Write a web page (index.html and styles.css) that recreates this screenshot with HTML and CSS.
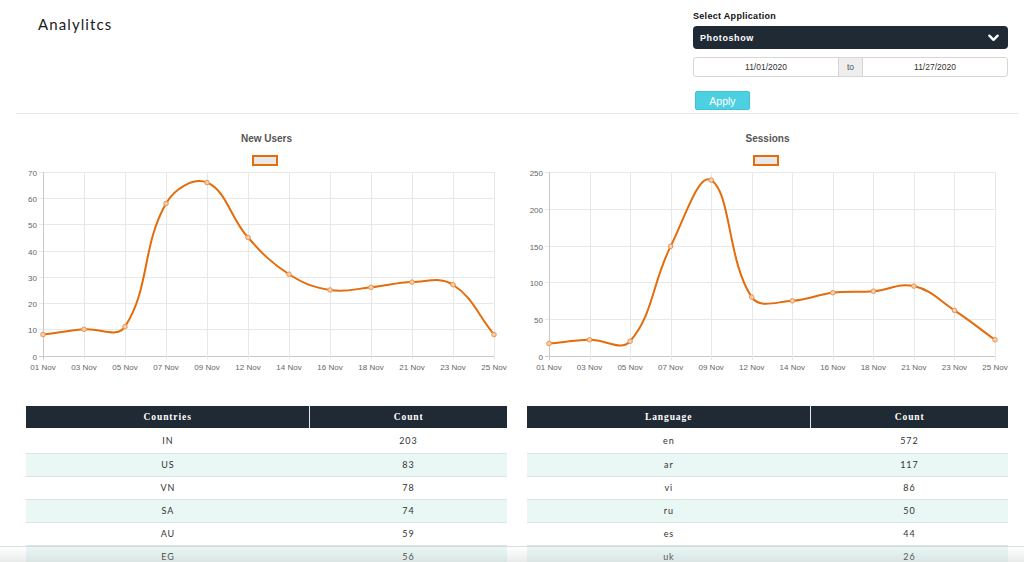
FILE: index.html
```html
<!DOCTYPE html>
<html>
<head>
<meta charset="utf-8">
<title>Analylitcs</title>
<link rel="stylesheet" href="styles.css">
</head>
<body>
<div class="page">
  <header class="topbar">
    <h1 class="title">Analylitcs</h1>
    <div class="controls">
      <div class="ctl-label">Select Application</div>
      <div class="select">
        <span>Photoshow</span>
        <svg class="chev" viewBox="0 0 12 8" width="11" height="8"><path d="M1.5 1.5 L6 6 L10.5 1.5" fill="none" stroke="#fff" stroke-width="2.6" stroke-linecap="round" stroke-linejoin="round"/></svg>
      </div>
      <div class="daterange">
        <div class="date">11/01/2020</div>
        <div class="to">to</div>
        <div class="date">11/27/2020</div>
      </div>
      <button class="apply">Apply</button>
    </div>
  </header>

  <section class="charts">
    <div class="chart">
      <div class="chart-title">New Users</div>
      <div class="legend-box"></div>
      <svg class="plot" width="481" height="210" viewBox="0 0 481 210"
        data-values="8,10,11,58,66,45,31,25,26,28,27,8" data-max="70" data-step="10"
        data-left="17" data-right="468" data-top="6" data-bottom="189.5"></svg>
    </div>
    <div class="chart">
      <div class="chart-title">Sessions</div>
      <div class="legend-box"></div>
      <svg class="plot" width="481" height="210" viewBox="0 0 481 210"
        data-values="17,22,20,149,239,80,75,86,88,95,62,22" data-max="250" data-step="50"
        data-left="22" data-right="468" data-top="6" data-bottom="190"></svg>
    </div>
  </section>

  <section class="tables">
    <table class="data">
      <thead><tr><th class="c1">Countries</th><th>Count</th></tr></thead>
      <tbody>
        <tr><td>IN</td><td>203</td></tr>
        <tr><td>US</td><td>83</td></tr>
        <tr><td>VN</td><td>78</td></tr>
        <tr><td>SA</td><td>74</td></tr>
        <tr><td>AU</td><td>59</td></tr>
        <tr><td>EG</td><td>56</td></tr>
      </tbody>
    </table>
    <table class="data">
      <thead><tr><th class="c1">Language</th><th>Count</th></tr></thead>
      <tbody>
        <tr><td>en</td><td>572</td></tr>
        <tr><td>ar</td><td>117</td></tr>
        <tr><td>vi</td><td>86</td></tr>
        <tr><td>ru</td><td>50</td></tr>
        <tr><td>es</td><td>44</td></tr>
        <tr><td>uk</td><td>26</td></tr>
      </tbody>
    </table>
  </section>
</div>
<div class="bottom-shade"></div>
<script src="script.js"></script>
</body>
</html>
```

FILE: styles.css
```css
* { box-sizing: border-box; }
html, body { margin: 0; padding: 0; background: #fff; }
body {
  font-family: "Lato", "Liberation Sans", sans-serif;
  color: #222;
  overflow: hidden;
  height: 562px;
}
.page { margin: 0 16px; width: 1002px; }

.topbar {
  display: flex;
  justify-content: space-between;
  align-items: flex-start;
  border-bottom: 1px solid #e6e6e6;
  height: 114px;
}
.title {
  margin: 15px 0 0 22px;
  font-size: 15px;
  line-height: 18px;
  font-weight: 400;
  letter-spacing: 1.1px;
  color: #1a1a1a;
}
.controls {
  width: 315px;
  margin-right: 10px;
  padding-top: 10px;
  display: flex;
  flex-direction: column;
}
.ctl-label {
  font-family: "Liberation Sans", sans-serif;
  font-size: 9px;
  font-weight: 700;
  line-height: 12px;
  letter-spacing: 0.3px;
  color: #111;
  margin-bottom: 4px;
}
.select {
  height: 23px;
  background: #1f2a35;
  border-radius: 4px;
  display: flex;
  align-items: center;
  justify-content: space-between;
  padding: 0 9px 0 7px;
  color: #fff;
  font-family: "Liberation Sans", sans-serif;
  font-size: 9px;
  font-weight: 700;
  letter-spacing: 0.6px;
}
.chev { display: block; }
.daterange {
  margin-top: 8px;
  height: 20px;
  display: flex;
  border: 1px solid #d6d6d6;
  border-radius: 3px;
  font-family: "Liberation Sans", sans-serif;
  font-size: 8.5px;
  color: #333;
}
.date {
  flex: 1;
  display: flex;
  align-items: center;
  justify-content: center;
}
.to {
  width: 25px;
  background: #eeeeee;
  border-left: 1px solid #d6d6d6;
  border-right: 1px solid #d6d6d6;
  display: flex;
  align-items: center;
  justify-content: center;
  color: #555;
}
.apply {
  margin: 14px 0 0 2px;
  width: 55px;
  height: 19px;
  border: 1px solid #3fc4d6;
  border-radius: 2px;
  background: #4dd1e2;
  color: #fff;
  font-family: "Liberation Sans", sans-serif;
  font-size: 10.5px;
  padding: 0;
  cursor: pointer;
}

.charts {
  display: flex;
  gap: 20px;
  padding: 0 10px;
}
.chart {
  width: 481px;
  display: flex;
  flex-direction: column;
  align-items: center;
}
.chart-title {
  margin-top: 18px;
  font-family: "Liberation Sans", sans-serif;
  font-size: 10px;
  font-weight: 700;
  line-height: 13px;
  color: #555;
}
.legend-box {
  margin-top: 10px;
  width: 26px;
  height: 11px;
  border: 2px solid #e46c0a;
  background: #e8e8e8;
  margin-left: -3px;
}
.plot { display: block; }
.plot .grid { stroke: #e8e8e8; stroke-width: 1; }
.plot .axis { stroke: #c9c9c9; stroke-width: 1; }
.plot .ylab, .plot .xlab {
  font-family: "Liberation Sans", sans-serif;
  font-size: 8px;
  fill: #666;
}
.plot .ylab { text-anchor: end; }
.plot .xlab { text-anchor: middle; }
.plot .line { fill: none; stroke: #e46c0a; stroke-width: 2; }
.plot .pt { fill: #f4cfae; stroke: #eb9550; stroke-width: 1; }

.tables {
  display: flex;
  gap: 20px;
  padding: 0 10px;
  margin-top: 30px;
}
.data {
  width: 481px;
  border-collapse: collapse;
  table-layout: fixed;
}
.data th {
  background: #1f2a35;
  color: #fff;
  height: 22px;
  font-family: "Liberation Serif", serif;
  font-weight: 700;
  font-size: 9.5px;
  letter-spacing: 0.9px;
  padding: 0;
}
.data th.c1 { width: 59%; border-right: 1px solid #e8e8e8; }
.data td {
  height: 23px;
  text-align: center;
  font-size: 9px;
  letter-spacing: 0.9px;
  color: #333;
  padding: 0;
  border-top: 1px solid #dfe5e4;
}
.data tbody tr:first-child td { border-top: none; height: 25px; }
.data tbody tr:nth-child(even) td { background: #e9f7f5; }

.bottom-shade {
  position: fixed;
  left: 0;
  right: 0;
  bottom: 0;
  height: 16px;
  background: linear-gradient(to bottom, rgba(255,255,255,0), rgba(190,198,198,0.35));
  border-top: 1px solid rgba(200,205,205,0.5);
  pointer-events: none;
}
```

FILE: script.js
```js
(function () {
  var NS = 'http://www.w3.org/2000/svg';
  var labels = ['01 Nov','03 Nov','05 Nov','07 Nov','09 Nov','12 Nov','14 Nov','16 Nov','18 Nov','21 Nov','23 Nov','25 Nov'];
  function build(svg) {
    var data = svg.getAttribute('data-values').split(',').map(Number);
    var max = +svg.getAttribute('data-max'), step = +svg.getAttribute('data-step');
    var L = +svg.getAttribute('data-left'), R = +svg.getAttribute('data-right');
    var T = +svg.getAttribute('data-top'), B = +svg.getAttribute('data-bottom');
    function el(name, attrs, text) {
      var e = document.createElementNS(NS, name);
      for (var k in attrs) e.setAttribute(k, attrs[k]);
      if (text != null) e.textContent = text;
      svg.appendChild(e);
      return e;
    }
    var n = data.length, dx = (R - L) / (n - 1);
    var xs = data.map(function (_, i) { return L + i * dx; });
    var ys = data.map(function (v) { return B - (v / max) * (B - T); });
    for (var v = 0; v <= max; v += step) {
      var y = Math.round(B - (v / max) * (B - T)) + 0.5;
      el('line', { x1: L - 4, x2: R, y1: y, y2: y, 'class': v === 0 ? 'axis' : 'grid' });
      el('text', { x: L - 6, y: y + 3, 'class': 'ylab' }, String(v));
    }
    xs.forEach(function (x, i) {
      var xx = Math.round(x) + 0.5;
      el('line', { x1: xx, x2: xx, y1: T, y2: B + 4, 'class': i === 0 ? 'axis' : 'grid' });
      el('text', { x: x, y: B + 14, 'class': 'xlab' }, labels[i]);
    });
    var t = 0.4, cps = [];
    for (var i = 0; i < n; i++) {
      var a = Math.max(0, i - 1), c = Math.min(n - 1, i + 1);
      var p0x = xs[a], p0y = ys[a], p1x = xs[i], p1y = ys[i], p2x = xs[c], p2y = ys[c];
      var d01 = Math.hypot(p1x - p0x, p1y - p0y), d12 = Math.hypot(p2x - p1x, p2y - p1y);
      var s01 = d01 / (d01 + d12), s12 = d12 / (d01 + d12);
      if (isNaN(s01)) s01 = 0; if (isNaN(s12)) s12 = 0;
      var fa = t * s01, fb = t * s12;
      var cp = {
        px: p1x - fa * (p2x - p0x), py: p1y - fa * (p2y - p0y),
        nx: p1x + fb * (p2x - p0x), ny: p1y + fb * (p2y - p0y)
      };
      cp.py = Math.min(B, Math.max(T, cp.py));
      cp.ny = Math.min(B, Math.max(T, cp.ny));
      cp.px = Math.min(R, Math.max(L, cp.px));
      cp.nx = Math.min(R, Math.max(L, cp.nx));
      cps.push(cp);
    }
    var d = 'M' + xs[0].toFixed(2) + ' ' + ys[0].toFixed(2);
    for (var j = 1; j < n; j++) {
      d += ' C' + cps[j - 1].nx.toFixed(2) + ' ' + cps[j - 1].ny.toFixed(2) + ' ' +
        cps[j].px.toFixed(2) + ' ' + cps[j].py.toFixed(2) + ' ' +
        xs[j].toFixed(2) + ' ' + ys[j].toFixed(2);
    }
    el('path', { d: d, 'class': 'line' });
    for (var k2 = 0; k2 < n; k2++) {
      el('circle', { cx: xs[k2], cy: ys[k2], r: 2.3, 'class': 'pt' });
    }
  }
  var svgs = document.querySelectorAll('svg.plot');
  for (var s = 0; s < svgs.length; s++) build(svgs[s]);
})();
```
